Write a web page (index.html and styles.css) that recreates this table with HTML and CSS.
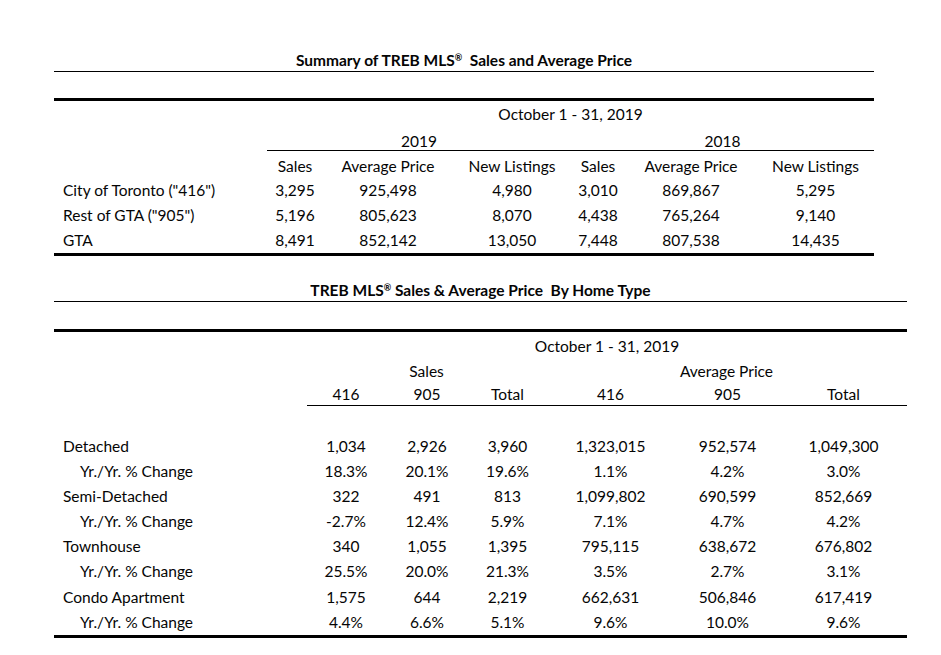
FILE: index.html
```html
<!DOCTYPE html>
<html lang="en">
<head>
<meta charset="utf-8">
<title>Summary of TREB MLS Sales and Average Price</title>
<link rel="stylesheet" href="styles.css">
</head>
<body>
<div class="page">
  <section class="block block-summary">
    <h1 class="title">Summary of TREB MLS<sup>®</sup>&nbsp; Sales and Average Price</h1>
    <div class="grid grid-summary">
      <div class="cell span-all">October 1 - 31, 2019</div>

      <div class="cell label year-gap"></div>
      <div class="cell year span-3">2019</div>
      <div class="cell year span-3">2018</div>

      <div class="cell label head"></div>
      <div class="cell head">Sales</div>
      <div class="cell head">Average Price</div>
      <div class="cell head">New Listings</div>
      <div class="cell head">Sales</div>
      <div class="cell head">Average Price</div>
      <div class="cell head">New Listings</div>

      <div class="cell label">City of Toronto ("416")</div>
      <div class="cell">3,295</div><div class="cell">925,498</div><div class="cell">4,980</div>
      <div class="cell">3,010</div><div class="cell">869,867</div><div class="cell">5,295</div>

      <div class="cell label">Rest of GTA ("905")</div>
      <div class="cell">5,196</div><div class="cell">805,623</div><div class="cell">8,070</div>
      <div class="cell">4,438</div><div class="cell">765,264</div><div class="cell">9,140</div>

      <div class="cell label">GTA</div>
      <div class="cell">8,491</div><div class="cell">852,142</div><div class="cell">13,050</div>
      <div class="cell">7,448</div><div class="cell">807,538</div><div class="cell">14,435</div>
    </div>
  </section>

  <section class="block block-type">
    <h1 class="title title-wide">TREB MLS<sup>®</sup> Sales &amp; Average Price&nbsp; By Home Type</h1>
    <div class="grid grid-type">
      <div class="cell span-all date-row">October 1 - 31, 2019</div>

      <div class="cell label group"></div>
      <div class="cell group span-3">Sales</div>
      <div class="cell group span-3">Average Price</div>

      <div class="cell label sub-gap"></div>
      <div class="cell sub">416</div>
      <div class="cell sub">905</div>
      <div class="cell sub">Total</div>
      <div class="cell sub">416</div>
      <div class="cell sub">905</div>
      <div class="cell sub">Total</div>

      <div class="cell spacer span-full"></div>

      <div class="cell label">Detached</div>
      <div class="cell">1,034</div><div class="cell">2,926</div><div class="cell">3,960</div>
      <div class="cell">1,323,015</div><div class="cell">952,574</div><div class="cell">1,049,300</div>

      <div class="cell label indent">Yr./Yr. % Change</div>
      <div class="cell">18.3%</div><div class="cell">20.1%</div><div class="cell">19.6%</div>
      <div class="cell">1.1%</div><div class="cell">4.2%</div><div class="cell">3.0%</div>

      <div class="cell label">Semi-Detached</div>
      <div class="cell">322</div><div class="cell">491</div><div class="cell">813</div>
      <div class="cell">1,099,802</div><div class="cell">690,599</div><div class="cell">852,669</div>

      <div class="cell label indent">Yr./Yr. % Change</div>
      <div class="cell">-2.7%</div><div class="cell">12.4%</div><div class="cell">5.9%</div>
      <div class="cell">7.1%</div><div class="cell">4.7%</div><div class="cell">4.2%</div>

      <div class="cell label">Townhouse</div>
      <div class="cell">340</div><div class="cell">1,055</div><div class="cell">1,395</div>
      <div class="cell">795,115</div><div class="cell">638,672</div><div class="cell">676,802</div>

      <div class="cell label indent">Yr./Yr. % Change</div>
      <div class="cell">25.5%</div><div class="cell">20.0%</div><div class="cell">21.3%</div>
      <div class="cell">3.5%</div><div class="cell">2.7%</div><div class="cell">3.1%</div>

      <div class="cell label">Condo Apartment</div>
      <div class="cell">1,575</div><div class="cell">644</div><div class="cell">2,219</div>
      <div class="cell">662,631</div><div class="cell">506,846</div><div class="cell">617,419</div>

      <div class="cell label indent">Yr./Yr. % Change</div>
      <div class="cell">4.4%</div><div class="cell">6.6%</div><div class="cell">5.1%</div>
      <div class="cell">9.6%</div><div class="cell">10.0%</div><div class="cell">9.6%</div>
    </div>
  </section>
</div>
</body>
</html>
```

FILE: styles.css
```css
html, body {
  margin: 0;
  padding: 0;
  background: #ffffff;
}

body {
  font-family: Lato, "Open Sans", "Liberation Sans", sans-serif;
  font-size: 15.5px;
  color: #050505;
}

.page {
  padding: 49px 0 0 54px;
}

.title {
  margin: 0;
  width: 820px;
  font-size: 15.5px;
  font-weight: bold;
  line-height: 22px;
  text-align: center;
  border-bottom: 1px solid #000;
}

.title sup {
  font-size: 9px;
  line-height: 0;
  vertical-align: 5px;
}

.title-wide {
  width: 853px;
}

.grid {
  display: grid;
  margin-top: 26px;
  border-top: 3px solid #000;
  border-bottom: 3px solid #000;
}

.grid-summary {
  width: 820px;
  grid-template-columns: 213px 56px 130px 118px 54px 132px 117px;
  grid-template-rows: 27px 23px 27px;
  grid-auto-rows: 25px;
}

.block-type {
  margin-top: 23px;
}

.grid-type {
  width: 853px;
  margin-top: 27px;
  grid-template-columns: 253px 78px 84px 77px 129px 105px 127px;
  grid-template-rows: 28px 22px 24px 28px;
  grid-auto-rows: 25.1px;
}

.cell {
  text-align: center;
  white-space: nowrap;
  line-height: 25px;
}

.label {
  text-align: left;
  padding-left: 9px;
}

.indent {
  padding-left: 26px;
}

.span-all {
  grid-column: 2 / 8;
  line-height: 27px;
}

.span-full {
  grid-column: 1 / 8;
}

.span-3 {
  grid-column: span 3;
}

.year {
  padding-top: 4px;
  line-height: 18px;
  border-bottom: 1px solid #000;
}

.head {
  padding-top: 3px;
  line-height: 24px;
}

.date-row {
  line-height: 28px;
}

.group {
  line-height: 22px;
}

.sub {
  padding-top: 2px;
  line-height: 21px;
  border-bottom: 1px solid #000;
}
```
